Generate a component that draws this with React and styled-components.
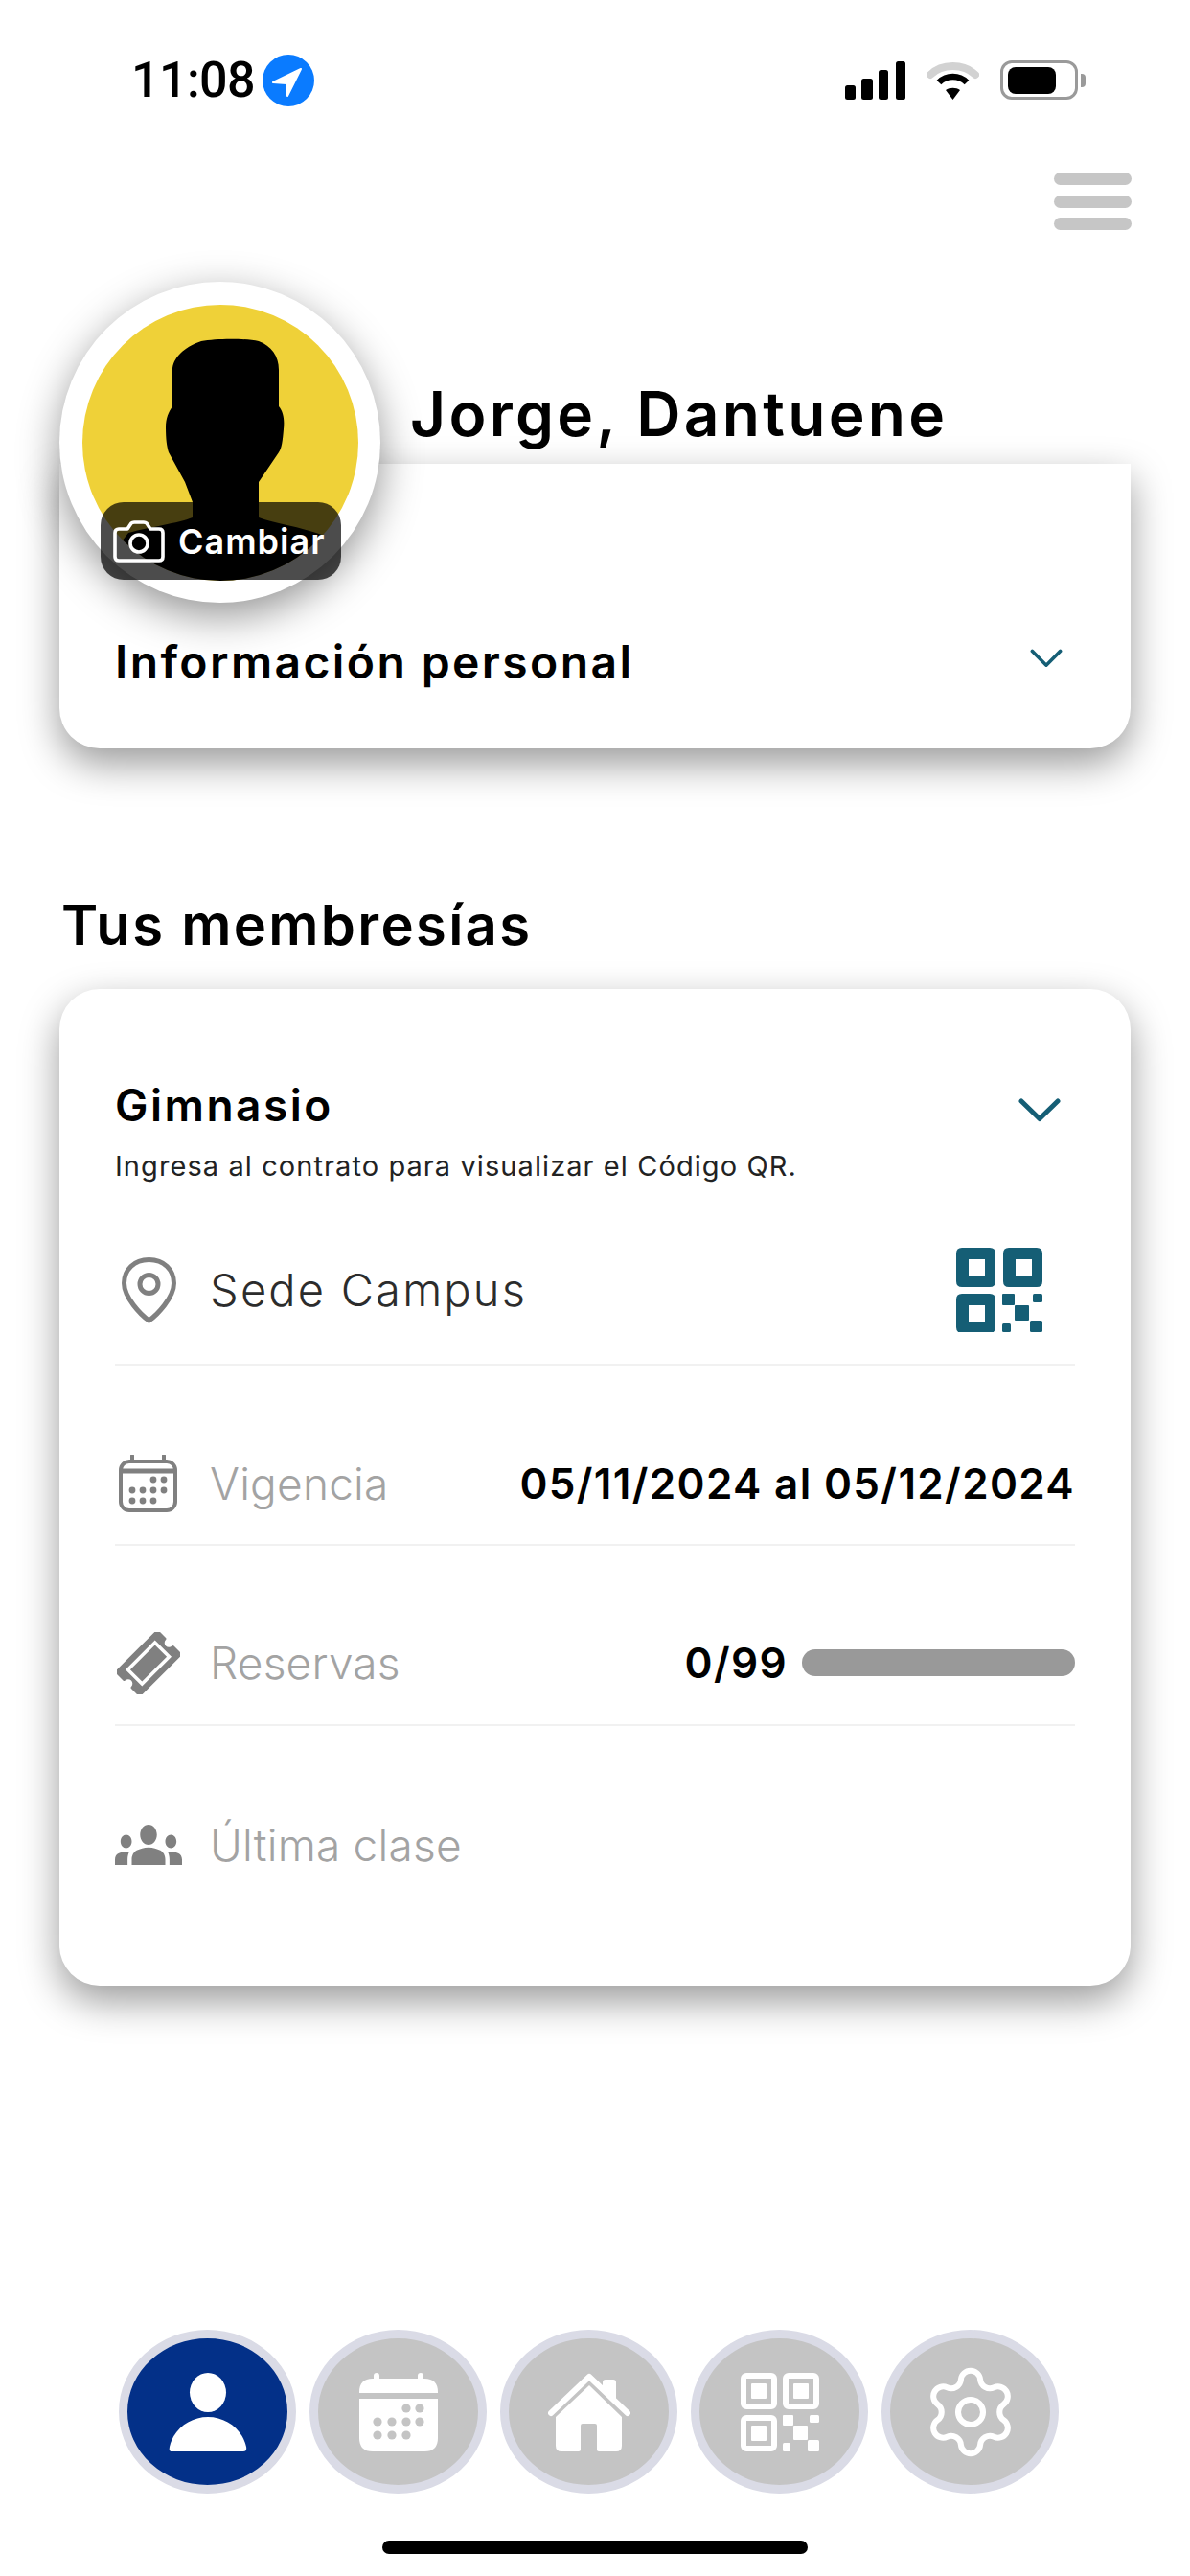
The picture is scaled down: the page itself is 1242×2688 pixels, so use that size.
import React from 'react';
import styled, { createGlobalStyle } from 'styled-components';
import { Settings } from 'lucide-react';
import { MdGroups } from 'react-icons/md';

const GlobalStyle = createGlobalStyle`
  html, body {
    margin: 0;
    padding: 0;
    background: #ffffff;
  }

  * {
    box-sizing: border-box;
  }
`;

const TEAL = '#155e75';
const ICON_GREY = '#808080';

function StatusBar() {
  return (
    <StatusRow>
      <TimeGroup>
        <Time>11:08</Time>
        <svg width="54" height="54" viewBox="0 0 54 54">
          <circle cx="27" cy="27" r="27" fill="#0a7bff" />
          <path d="M40 15 L11 29 L25 30 L26 43 Z" fill="#fff" stroke="#fff" strokeWidth="2" strokeLinejoin="round" />
        </svg>
      </TimeGroup>
      <StatusIcons>
        <svg width="63" height="40" viewBox="0 0 63 40">
          <rect x="0" y="25" width="11" height="15" rx="2.5" />
          <rect x="17" y="18" width="12" height="22" rx="2.5" />
          <rect x="35" y="9" width="10" height="31" rx="2.5" />
          <rect x="53" y="0" width="10" height="40" rx="2.5" />
        </svg>
        <svg width="55" height="40" viewBox="0 0 55 40">
          <path d="M4 14 C16 2 39 2 51 14" fill="none" stroke="#d2d2d2" strokeWidth="8" strokeLinecap="round" />
          <path d="M13 22 C21 14 34 14 42 22" fill="none" stroke="#000" strokeWidth="6.5" />
          <path d="M27.5 40 L20 30 C24 27 31 27 35 30 Z" fill="#000" />
        </svg>
        <Battery>
          <BatteryFill />
          <BatteryNub />
        </Battery>
      </StatusIcons>
    </StatusRow>
  );
}

function Silhouette() {
  return (
    <svg width="288" height="288" viewBox="0 0 288 288">
      <path
        d="M124 38 C140 35 170 35 184 38 C197 43 205 53 205 68 L205 106 C210 112 211 120 210 130 C209 142 208 150 205 154 L184 185 L184 222 C200 228 228 232 250 240 L300 300 L0 300 L48 238 C70 232 100 228 115 222 L115 206 L107 185 L90 154 C88 148 87 140 87 128 C87 118 90 112 94 106 L94 68 C94 56 106 44 124 38 Z"
        fill="#000"
      />
    </svg>
  );
}

function CameraIcon() {
  return (
    <svg width="54" height="44" viewBox="0 0 54 44" fill="none" stroke="#fff" strokeWidth="3.6" strokeLinejoin="round">
      <path d="M6 9 H15 L19 3 Q20 2 22 2 H32 Q34 2 35 3 L39 9 H48 Q52 9 52 13 V38 Q52 42 48 42 H6 Q2 42 2 38 V13 Q2 9 6 9 Z" />
      <circle cx="27" cy="24" r="9" />
    </svg>
  );
}

function Chevron({ width, height, strokeWidth }) {
  return (
    <svg width={width} height={height} viewBox="0 0 44 25" preserveAspectRatio="none" fill="none" stroke={TEAL} strokeWidth={strokeWidth} strokeLinecap="round" strokeLinejoin="round">
      <path d="M3 3 L22 21.5 L41 3" />
    </svg>
  );
}

function PinIcon() {
  return (
    <svg width="57" height="69" viewBox="0 0 57 69" fill="none" stroke={ICON_GREY} strokeWidth="5">
      <path d="M28.5 2.5 C13 2.5 2.5 13 2.5 27 C2.5 42 20 60 28.5 66 C37 60 54.5 42 54.5 27 C54.5 13 44 2.5 28.5 2.5 Z" strokeLinejoin="round" />
      <circle cx="28.5" cy="28" r="9.5" />
    </svg>
  );
}

function CalendarIcon() {
  const dots = [[36, 26], [47, 26], [14, 37], [25, 37], [36, 37], [47, 37], [14, 48], [25, 48], [36, 48]];

  return (
    <svg width="62" height="60" viewBox="0 0 62 60" fill="none" stroke={ICON_GREY} strokeWidth="4">
      <rect x="2" y="7" width="57" height="51" rx="9" />
      <path d="M2 17 H59" strokeWidth="5" />
      <path d="M14 1 V7 M47 1 V7" strokeLinecap="round" />
      {dots.map(([cx, cy]) => (
        <circle key={`${cx}-${cy}`} cx={cx} cy={cy} r="3.4" fill={ICON_GREY} stroke="none" />
      ))}
    </svg>
  );
}

function TicketIcon() {
  return (
    <svg width="66" height="65" viewBox="-33 -32.5 66 65">
      <g transform="rotate(-45)">
        <path d="M-30 -17 H30 V-6 A6 6 0 0 0 30 6 V17 H-30 V6 A6 6 0 0 0 -30 -6 Z" fill={ICON_GREY} stroke={ICON_GREY} strokeWidth="3" strokeLinejoin="round" />
        <rect x="-20" y="-10.5" width="40" height="21" fill={ICON_GREY} stroke="#fff" strokeWidth="3.5" />
      </g>
    </svg>
  );
}

function CardQr() {
  const finders = [[0, 0], [49, 0], [0, 48]];

  return (
    <svg width="90" height="88" viewBox="0 0 90 88" fill={TEAL}>
      {finders.map(([x, y]) => (
        <path key={`${x}-${y}`} fillRule="evenodd" d={`M${x + 6} ${y} H${x + 35} Q${x + 41} ${y} ${x + 41} ${y + 6} V${y + 35} Q${x + 41} ${y + 41} ${x + 35} ${y + 41} H${x + 6} Q${x} ${y + 41} ${x} ${y + 35} V${y + 6} Q${x} ${y} ${x + 6} ${y} Z M${x + 13} ${y + 12} V${y + 29} H${x + 30} V${y + 12} Z`} />
      ))}
      <rect x="48" y="48" width="13" height="12" rx="1" />
      <rect x="80" y="48" width="10" height="9" rx="1.5" />
      <rect x="61" y="60" width="15" height="16" rx="1" />
      <rect x="48" y="79" width="9" height="9" rx="1.5" />
      <rect x="77" y="76" width="13" height="12" rx="1.5" />
    </svg>
  );
}

function NavUser() {
  return (
    <svg width="82" height="82" viewBox="0 0 82 82" fill="#fff">
      <ellipse cx="41" cy="20.5" rx="19" ry="20.5" />
      <path d="M3 82 Q0 82 1 77 C5 59 22 46 41 46 C60 46 77 59 81 77 Q82 82 78 82 Z" />
    </svg>
  );
}

function NavCalendar() {
  const dots = [[49, 37], [63, 37], [19, 51], [34, 51], [49, 51], [63, 51], [19, 65], [34, 65], [49, 65]];

  return (
    <svg width="82" height="82" viewBox="0 0 82 82" fill="#fff">
      <path d="M15 6 V3 a3 3 0 0 1 6 0 V6 H61 V3 a3 3 0 0 1 6 0 V6 H68 Q82 6 82 20 V21 H0 V20 Q0 6 14 6 Z" />
      <path fillRule="evenodd" d="M0 27 H82 V68 Q82 82 68 82 H14 Q0 82 0 68 Z" />
      {dots.map(([cx, cy]) => (
        <circle key={`${cx}-${cy}`} cx={cx} cy={cy} r="4.6" fill="#c4c4c4" />
      ))}
    </svg>
  );
}

function NavHome() {
  return (
    <svg width="86" height="82" viewBox="0 0 86 82" fill="#fff">
      <path d="M3 42 L43 4 L83 42" fill="none" stroke="#fff" strokeWidth="6" strokeLinecap="round" strokeLinejoin="round" />
      <path d="M43 13 L8 46 V76 Q8 82 14 82 H32 Q34 82 34 80 V55 Q34 53 36 53 H49 Q51 53 51 55 V80 Q51 82 53 82 H71 Q77 82 77 76 V46 Z" />
      <path d="M57 10 Q57 7 60 7 H68 Q71 7 71 10 V32 L57 19 Z" />
    </svg>
  );
}

function NavQr() {
  const finders = [[0, 0], [44, 0], [0, 44]];

  return (
    <svg width="82" height="82" viewBox="0 0 82 82" fill="#fff">
      {finders.map(([x, y]) => (
        <g key={`${x}-${y}`}>
          <rect x={x + 3} y={y + 3} width="32" height="32" rx="3" fill="none" stroke="#fff" strokeWidth="6" />
          <rect x={x + 11} y={y + 11} width="16" height="16" rx="1" />
        </g>
      ))}
      <rect x="44" y="44" width="11" height="11" rx="1" />
      <rect x="72" y="44" width="10" height="8" rx="1.5" />
      <rect x="55" y="55" width="15" height="15" rx="1" />
      <rect x="44" y="73" width="8" height="9" rx="1.5" />
      <rect x="70" y="70" width="12" height="12" rx="1.5" />
    </svg>
  );
}

function InfoRow({ icon, label, $pad, $tall, $last, $dark, children }) {
  return (
    <Row $pad={$pad} $tall={$tall} $last={$last}>
      <IconSlot>{icon}</IconSlot>
      <RowLabel $dark={$dark}>{label}</RowLabel>
      {children}
    </Row>
  );
}

export default function App() {
  return (
    <Page>
      <GlobalStyle />
      <StatusBar />

      <MenuRow>
        <MenuButton>
          <MenuBar />
          <MenuBar />
          <MenuBar />
        </MenuButton>
      </MenuRow>

      <ProfileSection>
        <Avatar>
          <AvatarPhoto>
            <Silhouette />
          </AvatarPhoto>
          <ChangeBadge>
            <CameraIcon />
            <span>Cambiar</span>
          </ChangeBadge>
        </Avatar>

        <Name>Jorge, Dantuene</Name>

        <PersonalCard>
          <PersonalTitle>Información personal</PersonalTitle>
          <Chevron width={34} height={20} strokeWidth={4.5} />
        </PersonalCard>
      </ProfileSection>

      <SectionTitle>Tus membresías</SectionTitle>

      <MembershipCard>
        <CardHeader>
          <CardHeading>
            <CardTitle>Gimnasio</CardTitle>
            <CardHint>Ingresa al contrato para visualizar el Código QR.</CardHint>
          </CardHeading>
          <Chevron width={44} height={25} strokeWidth={5} />
        </CardHeader>

        <InfoRow icon={<PinIcon />} label="Sede Campus" $pad={4} $tall={152} $dark>
          <QrSlot>
            <CardQr />
          </QrSlot>
        </InfoRow>
        <InfoRow icon={<CalendarIcon />} label="Vigencia" $pad={29}>
          <RowValue>05/11/2024 al 05/12/2024</RowValue>
        </InfoRow>
        <InfoRow icon={<TicketIcon />} label="Reservas" $pad={30}>
          <RowValue>0/99</RowValue>
          <ProgressTrack />
        </InfoRow>
        <InfoRow icon={<GroupsIcon size={70} />} label="Última clase" $pad={29} $last />
      </MembershipCard>

      <BottomNav>
        <NavButton $active><NavUser /></NavButton>
        <NavButton><NavCalendar /></NavButton>
        <NavButton><NavHome /></NavButton>
        <NavButton><NavQr /></NavButton>
        <NavButton><Settings size={104} strokeWidth={1.4} color="#ffffff" /></NavButton>
      </BottomNav>

      <HomeBar />
    </Page>
  );
}

const Page = styled.div`
  position: relative;
  display: flex;
  flex-direction: column;
  width: 1242px;
  height: 2688px;
  overflow: hidden;
  background: #ffffff;
  font-family: "Inter", "Noto Sans", sans-serif;
  color: #000000;
`;

const StatusRow = styled.div`
  display: flex;
  justify-content: space-between;
  align-items: flex-start;
  padding: 57px 117px 0 137px;
  height: 110px;
`;

const TimeGroup = styled.div`
  display: flex;
  align-items: center;
  gap: 8px;
`;

const Time = styled.span`
  font-family: "Roboto", sans-serif;
  font-size: 52px;
  font-weight: 500;
  line-height: 54px;
  letter-spacing: -0.6px;
`;

const StatusIcons = styled.div`
  display: flex;
  align-items: center;
  gap: 22px;
  margin-top: 6px;
`;

const Battery = styled.div`
  position: relative;
  width: 81px;
  height: 41px;
  border: 3px solid #9a9a9a;
  border-radius: 12px;
  padding: 4px 5px;
`;

const BatteryFill = styled.div`
  width: 50px;
  height: 28px;
  border-radius: 8px;
  background: #000000;
`;

const BatteryNub = styled.div`
  position: absolute;
  top: 11px;
  right: -11px;
  width: 5px;
  height: 14px;
  border-radius: 0 4px 4px 0;
  background: #9a9a9a;
`;

const MenuRow = styled.div`
  display: flex;
  justify-content: flex-end;
  padding: 70px 61px 0 0;
`;

const MenuButton = styled.div`
  display: flex;
  flex-direction: column;
  justify-content: space-between;
  width: 81px;
  height: 60px;
`;

const MenuBar = styled.div`
  height: 13px;
  border-radius: 7px;
  background: #c6c6c6;
`;

const ProfileSection = styled.section`
  position: relative;
  display: flex;
  flex-direction: column;
  padding-top: 154px;
`;

const Avatar = styled.div`
  position: absolute;
  z-index: 2;
  top: 54px;
  left: 62px;
  display: flex;
  align-items: center;
  justify-content: center;
  width: 335px;
  height: 335px;
  border-radius: 50%;
  background: #ffffff;
  box-shadow: 0 14px 44px rgba(0, 0, 0, 0.42);
`;

const AvatarPhoto = styled.div`
  width: 288px;
  height: 288px;
  border-radius: 50%;
  overflow: hidden;
  background: #efd138;

  svg {
    display: block;
  }
`;

const ChangeBadge = styled.div`
  position: absolute;
  left: 43px;
  top: 230px;
  display: flex;
  align-items: center;
  gap: 14px;
  width: 251px;
  height: 81px;
  padding-left: 13px;
  border-radius: 24px;
  background: rgba(0, 0, 0, 0.7);
  color: #ffffff;
  font-size: 36px;
  font-weight: 600;
  letter-spacing: 1px;
`;

const Name = styled.h1`
  margin: 0;
  padding-left: 428px;
  height: 90px;
  font-size: 64px;
  font-weight: 600;
  line-height: 75px;
  letter-spacing: 3.3px;
`;

const PersonalCard = styled.div`
  display: flex;
  align-items: center;
  justify-content: space-between;
  margin: 0 62px;
  height: 297px;
  padding: 115px 71px 0 58px;
  border-radius: 0 0 42px 42px;
  background: #ffffff;
  box-shadow: 0 16px 40px rgba(0, 0, 0, 0.4);

  svg {
    margin-bottom: 7px;
  }
`;

const PersonalTitle = styled.div`
  font-size: 48px;
  font-weight: 600;
  letter-spacing: 2.4px;
`;

const SectionTitle = styled.h2`
  margin: 140px 0 0;
  padding-left: 64px;
  height: 111px;
  font-size: 58px;
  font-weight: 600;
  line-height: 88px;
  letter-spacing: 2.3px;
`;

const MembershipCard = styled.div`
  display: flex;
  flex-direction: column;
  margin: 0 62px;
  height: 1040px;
  padding: 93px 58px 0;
  border-radius: 42px;
  background: #ffffff;
  box-shadow: 0 16px 40px rgba(0, 0, 0, 0.4);
`;

const CardHeader = styled.div`
  display: flex;
  justify-content: space-between;
  align-items: flex-start;
  padding-right: 15px;
  height: 148px;

  svg {
    margin-top: 21px;
  }
`;

const CardHeading = styled.div`
  display: flex;
  flex-direction: column;
`;

const CardTitle = styled.div`
  font-size: 46px;
  font-weight: 600;
  line-height: 56px;
  letter-spacing: 2.5px;
`;

const CardHint = styled.div`
  margin-top: 18px;
  font-size: 29px;
  font-weight: 400;
  line-height: 36px;
  letter-spacing: 1.08px;
  color: #222222;
`;

const Row = styled.div`
  display: flex;
  align-items: center;
  height: ${(props) => (props.$tall ? `${props.$tall}px` : '188px')};
  padding-top: ${(props) => (props.$tall ? '0' : '88px')};
  padding-bottom: ${(props) => props.$pad}px;
  border-bottom: ${(props) => (props.$last ? 'none' : '2px solid #f1f1f1')};
`;

const IconSlot = styled.div`
  display: flex;
  align-items: center;
  justify-content: center;
  flex: none;
  width: 70px;
  margin-right: 29px;

  svg {
    display: block;
  }
`;

const GroupsIcon = styled(MdGroups).attrs({ preserveAspectRatio: 'none' })`
  width: 70px;
  height: 84px;
  color: ${ICON_GREY};
`;

const RowLabel = styled.span`
  flex: 1;
  font-size: ${(props) => (props.$dark ? '47px' : '46px')};
  font-weight: 300;
  line-height: 56px;
  letter-spacing: ${(props) => (props.$dark ? '2.2px' : '0.2px')};
  color: ${(props) => (props.$dark ? '#2c2c2c' : '#a3a3a3')};
`;

const RowValue = styled.span`
  font-size: 44px;
  font-weight: 600;
  line-height: 56px;
  letter-spacing: 1.35px;
  color: #000000;
`;

const QrSlot = styled.div`
  margin-right: 34px;

  svg {
    display: block;
  }
`;

const ProgressTrack = styled.div`
  width: 285px;
  height: 28px;
  margin-left: 15px;
  border-radius: 14px;
  background: #999999;
`;

const BottomNav = styled.nav`
  display: flex;
  gap: 14px;
  margin-top: auto;
  padding-left: 124px;
`;

const NavButton = styled.div`
  display: flex;
  align-items: center;
  justify-content: center;
  width: 185px;
  height: 171px;
  border: 9px solid #dadbe6;
  border-radius: 50%;
  background: ${(props) => (props.$active ? '#033088' : '#c4c4c4')};
`;

const HomeBar = styled.div`
  align-self: center;
  width: 444px;
  height: 14px;
  margin: 49px 0 23px;
  border-radius: 7px;
  background: #000000;
`;
